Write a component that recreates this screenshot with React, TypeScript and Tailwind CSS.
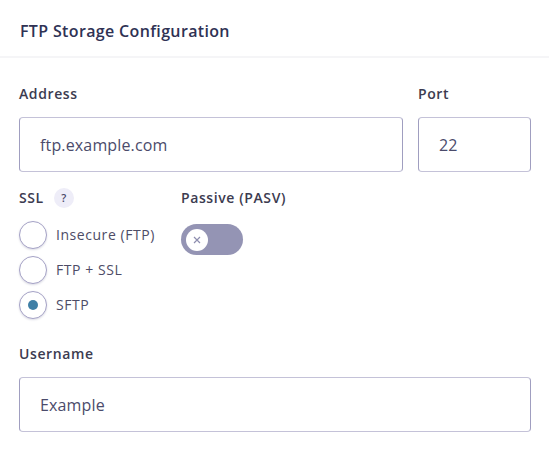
function Radio({ label, checked }: { label: string; checked?: boolean }) {
  return (
    <div className="flex items-center h-[35px]">
      <div className="w-[28px] h-[28px] rounded-full border border-[#a5a2c6] bg-white shadow-[0_1px_2px_rgba(60,60,110,0.18)] flex items-center justify-center">
        {checked && <div className="w-[10px] h-[10px] rounded-full bg-[#3f7fa6]" />}
      </div>
      <span className="ml-[9px] text-[14px] leading-5 tracking-[0.55px] text-[#4d4c66]">{label}</span>
    </div>
  );
}

function Field({ label, value, width, gap }: { label: string; value: string; width: string; gap: string }) {
  return (
    <div className={width}>
      <div className="text-[14px] leading-5 font-[550] tracking-[0.6px] text-[#3c3b50]">{label}</div>
      <div className={`${gap} h-[55px] rounded-[4px] border border-x-[#a09ec0] border-y-[#c4c2d8] flex items-center pl-[20px] text-[16px] tracking-[0.15px] text-[#4b4b6b]`}>{value}</div>
    </div>
  );
}

export default function App() {
  return (
    <div className="w-[549px] h-[450px] bg-white font-['Open_Sans',sans-serif] overflow-hidden">
      <div className="h-[58px] border-b-2 border-[#f5f5f7] pl-5 pt-[19px] text-[16px] leading-6 font-semibold tracking-[0.35px] text-[#2f3254]">FTP Storage Configuration</div>
      <div className="pl-[19px] pr-[18px] pt-[26px]">
        <div className="flex gap-[15px]">
          <Field label="Address" value="ftp.example.com" width="w-[384px]" gap="mt-[13px]" />
          <Field label="Port" value="22" width="w-[113px]" gap="mt-[13px]" />
        </div>
        <div className="flex mt-[16px]">
          <div className="w-[162px]">
            <div className="flex items-center h-[20px]">
              <span className="text-[14px] leading-5 font-[550] tracking-[0.6px] text-[#3c3b50]">SSL</span>
              <span className="ml-[10px] w-[20px] h-[20px] rounded-full bg-[#eeedf8] flex items-center justify-center text-[11px] font-semibold text-[#4b4a6b]">?</span>
            </div>
            <div className="mt-[9px]">
              <Radio label="Insecure (FTP)" />
              <Radio label="FTP + SSL" />
              <Radio label="SFTP" checked />
            </div>
          </div>
          <div>
            <div className="text-[14px] leading-5 font-[550] tracking-[0.6px] text-[#3c3b50]">Passive (PASV)</div>
            <div className="mt-[16px] w-[62px] h-[31px] rounded-full bg-[#9494b4] flex items-center pl-[5px]">
              <div className="w-[22px] h-[22px] rounded-full bg-white flex items-center justify-center">
                <svg width="8" height="8" viewBox="0 0 8 8" fill="none" stroke="#8d8daf" strokeWidth="1.2"><path d="M1 1l6 6M7 1L1 7" /></svg>
              </div>
            </div>
          </div>
        </div>
        <div className="mt-[22px]">
          <Field label="Username" value="Example" width="w-[512px]" gap="mt-[13px]" />
        </div>
      </div>
    </div>
  );
}
